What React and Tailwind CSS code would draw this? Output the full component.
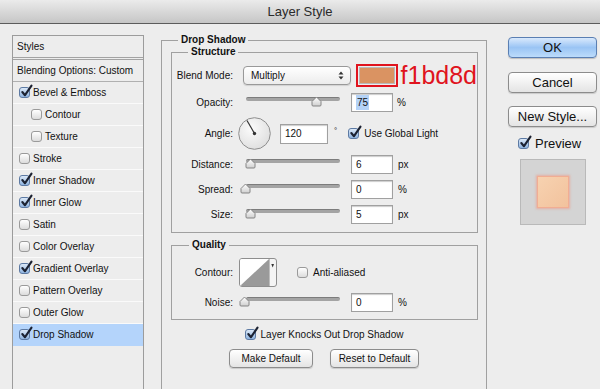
import React from 'react';

const Check = ({ on, size = 'w-[11px] h-[11px]' }) => (
    <span
        className={`relative inline-block shrink-0 ${size} rounded-[3px] border ${
            on
                ? 'border-[#5d7aa3] bg-linear-to-b from-[#dbe8f7] to-[#8fb4e0]'
                : 'border-[#9a9a9a] bg-linear-to-b from-[#ffffff] to-[#dcdcdc]'
        }`}
    >
        {on && (
            <svg className="absolute -top-[4px] left-[0px] w-[13px] h-[14px]" viewBox="0 0 13 14">
                <path d="M2.3 8 L5 11.2 L11.5 1.6" fill="none" stroke="#1c2232" strokeWidth="2.1" strokeLinecap="round" strokeLinejoin="round" />
            </svg>
        )}
    </span>
);

const styleRows = [
    { name: 'Bevel & Emboss', on: true },
    { name: 'Contour', on: false, sub: true },
    { name: 'Texture', on: false, sub: true },
    { name: 'Stroke', on: false },
    { name: 'Inner Shadow', on: true },
    { name: 'Inner Glow', on: true },
    { name: 'Satin', on: false },
    { name: 'Color Overlay', on: false },
    { name: 'Gradient Overlay', on: true },
    { name: 'Pattern Overlay', on: false },
    { name: 'Outer Glow', on: false },
    { name: 'Drop Shadow', on: true, active: true },
];

// thumb offset is measured from the start of the track
const Slider = ({ thumb }) => (
    <div className="relative w-[94px] h-[11px] shrink-0">
        <div className="h-[4px] rounded-full bg-[#a4a4a4] border-t border-[#7c7c7c]" />
        <svg className="absolute top-[-1px] w-[11px] h-[11px]" style={{ left: thumb }} viewBox="0 0 11 11">
            <defs>
                <linearGradient id="thumbFill" x1="0" y1="0" x2="0" y2="1">
                    <stop offset="0" stopColor="#ffffff" />
                    <stop offset="1" stopColor="#cfcfcf" />
                </linearGradient>
            </defs>
            <path d="M1 9 V5.5 L5.5 1 L10 5.5 V9 Q10 10 9 10 H2 Q1 10 1 9 Z" fill="url(#thumbFill)" stroke="#7a7a7a" strokeWidth="0.9" />
        </svg>
    </div>
);

const Field = ({ children, w = 'w-[42px]', h = 'h-[19px]' }) => (
    <div className={`${w} ${h} shrink-0 bg-white border border-[#a0a0a0] shadow-[inset_0_1px_1px_rgba(0,0,0,0.2)] pl-[4px] flex items-center`}>
        {children}
    </div>
);

const Label = ({ children }) => <div className="w-[61px] shrink-0 text-right">{children}</div>;

const Legend = ({ children, left }) => (
    <span className={`absolute -top-[7px] ${left} px-[3px] bg-[#ededed] font-bold leading-[12px]`}>{children}</span>
);

const Button = ({ children, className = '' }) => (
    <div className={`flex items-center justify-center rounded-[4px] border border-[#8c8c8c] bg-linear-to-b from-[#ffffff] to-[#e4e4e4] shadow-[0_1px_1px_rgba(0,0,0,0.15)] ${className}`}>
        {children}
    </div>
);

const App = () => {
    return (
        <div className="w-[600px] h-[389px] overflow-hidden bg-[#ededed] text-[10px] text-[#111] font-['Liberation_Sans',Arial,sans-serif]">
            {/* Title bar */}
            <div className="h-[24px] flex items-center justify-center border-b border-[#5c5c5c] bg-linear-to-b from-[#ebebeb] to-[#c6c6c6] text-[13px] text-[#2a2a2a]">
                Layer Style
            </div>

            <div className="flex">
                {/* Styles list */}
                <div className="ml-[12px] mt-[11px] w-[132px] h-[360px] shrink-0 border border-[#9c9c9c]">
                    <div className="h-[24px] flex items-center pl-[4px] border-b-[3px] border-double border-[#a3a3a3]">Styles</div>
                    <div className="h-[22px] flex items-center pl-[4px] border-b border-[#b0b0b0]">Blending Options: Custom</div>
                    {styleRows.map((row) => (
                        <div
                            key={row.name}
                            className={`h-[22px] flex items-center gap-[3px] border-b ${row.sub ? 'pl-[18px]' : 'pl-[6px]'} ${
                                row.active ? 'bg-[#b4d4fb] border-[#b4d4fb]' : 'border-[#fafafa]'
                            }`}
                        >
                            <Check on={row.on} />
                            <span>{row.name}</span>
                        </div>
                    ))}
                </div>

                {/* Drop Shadow panel */}
                <div className="relative ml-[17px] mt-[16px] w-[326px] h-[360px] shrink-0 border border-[#a0a0a0]">
                    <Legend left="left-[16px]">Drop Shadow</Legend>

                    {/* Structure */}
                    <div className="relative ml-[9px] mt-[11px] w-[307px] border border-[#a0a0a0] pt-[11px] pb-[8px]">
                        <Legend left="left-[16px]">Structure</Legend>

                        <div className="flex items-center h-[23px]">
                            <Label>Blend Mode:</Label>
                            <div className="ml-[10px] w-[112px] h-[19px] rounded-[4px] border border-[#999] bg-linear-to-b from-[#ffffff] to-[#ececec] shadow-[0_1px_1px_rgba(0,0,0,0.12)] flex items-center justify-between pl-[7px] pr-[6px]">
                                <span>Multiply</span>
                                <svg width="6" height="9" viewBox="0 0 6 9">
                                    <path d="M0.5 3.5 L3 0.5 L5.5 3.5 Z M0.5 5.5 L3 8.5 L5.5 5.5 Z" fill="#333" />
                                </svg>
                            </div>
                            <div className="ml-[5px] w-[42px] h-[23px] shrink-0 border-2 border-[#e0141e] p-[1px]">
                                <div className="w-full h-full border border-[#b9b9b9] bg-[#da9362]" />
                            </div>
                            <span className="ml-[3px] text-[25px] leading-[23px] text-[#e0141e] whitespace-nowrap">f1bd8d</span>
                        </div>

                        <div className="flex items-center h-[19px] mt-[6px]">
                            <Label>Opacity:</Label>
                            <div className="ml-[13px]"><Slider thumb={65} /></div>
                            <div className="ml-[11px]">
                                <Field><span className="bg-[#b5d3f7] px-[1px] leading-[15px]">75</span></Field>
                            </div>
                            <span className="ml-[4px]">%</span>
                        </div>

                        <div className="flex items-center h-[33px] mt-[5px]">
                            <Label>Angle:</Label>
                            <svg className="ml-[5px] shrink-0" width="33" height="33" viewBox="0 0 33 33">
                                <defs>
                                    <radialGradient id="dialFill" cx="0.4" cy="0.35" r="0.7">
                                        <stop offset="0" stopColor="#fbfbfb" />
                                        <stop offset="1" stopColor="#dedede" />
                                    </radialGradient>
                                </defs>
                                <circle cx="16.5" cy="16.5" r="15.8" fill="url(#dialFill)" stroke="#8e8e8e" strokeWidth="1" />
                                <line x1="16.5" y1="16.5" x2="9" y2="3.5" stroke="#333" strokeWidth="1.2" />
                                <circle cx="16.5" cy="16.5" r="1.7" fill="#333" />
                            </svg>
                            <div className="ml-[9px]">
                                <Field w="w-[48px]" h="h-[20px]">120</Field>
                            </div>
                            <span className="ml-[6px] -mt-[6px] text-[8px]">°</span>
                            <div className="ml-[11px] flex items-center gap-[5px]">
                                <Check on />
                                <span>Use Global Light</span>
                            </div>
                        </div>

                        <div className="flex items-center h-[19px] mt-[5px]">
                            <Label>Distance:</Label>
                            <div className="ml-[13px]"><Slider thumb={-1} /></div>
                            <div className="ml-[11px]"><Field>6</Field></div>
                            <span className="ml-[5px]">px</span>
                        </div>

                        <div className="flex items-center h-[19px] mt-[6px]">
                            <Label>Spread:</Label>
                            <div className="ml-[13px]"><Slider thumb={-6} /></div>
                            <div className="ml-[11px]"><Field>0</Field></div>
                            <span className="ml-[5px]">%</span>
                        </div>

                        <div className="flex items-center h-[19px] mt-[6px]">
                            <Label>Size:</Label>
                            <div className="ml-[13px]"><Slider thumb={-1} /></div>
                            <div className="ml-[11px]"><Field>5</Field></div>
                            <span className="ml-[5px]">px</span>
                        </div>
                    </div>

                    {/* Quality */}
                    <div className="relative ml-[9px] mt-[12px] w-[307px] border border-[#a0a0a0] pt-[12px] pb-[7px]">
                        <Legend left="left-[17px]">Quality</Legend>

                        <div className="flex items-center h-[29px]">
                            <Label>Contour:</Label>
                            <div className="ml-[6px] w-[38px] h-[29px] shrink-0 rounded-[3px] border border-[#8e8e8e] bg-[#f4f4f4] overflow-hidden">
                                <svg width="36" height="27" viewBox="0 0 36 27">
                                    <rect x="0" y="0" width="29" height="27" fill="#ffffff" />
                                    <path d="M0 27 L29 0 L29 27 Z" fill="#9a9a9a" />
                                    <line x1="29.5" y1="0" x2="29.5" y2="27" stroke="#bdbdbd" strokeWidth="1" />
                                    <path d="M31.3 5 L34 5 L32.65 8.5 Z" fill="#333" />
                                </svg>
                            </div>
                            <div className="ml-[20px] flex items-center gap-[5px]">
                                <Check on={false} />
                                <span>Anti-aliased</span>
                            </div>
                        </div>

                        <div className="flex items-center h-[19px] mt-[6px]">
                            <Label>Noise:</Label>
                            <div className="ml-[13px]"><Slider thumb={-7} /></div>
                            <div className="ml-[11px]"><Field>0</Field></div>
                            <span className="ml-[5px]">%</span>
                        </div>
                    </div>

                    <div className="mt-[8px] flex justify-center items-center gap-[5px] h-[12px]">
                        <Check on />
                        <span>Layer Knocks Out Drop Shadow</span>
                    </div>

                    <div className="mt-[9px] flex justify-center gap-[17px]">
                        <Button className="w-[84px] h-[19px]">Make Default</Button>
                        <Button className="w-[89px] h-[19px]">Reset to Default</Button>
                    </div>
                </div>

                {/* Right buttons */}
                <div className="ml-[21px] w-[89px] shrink-0 pt-[13px] flex flex-col text-[13px]">
                    <div className="h-[21px] flex items-center justify-center rounded-[4px] border border-[#5a7fb3] bg-linear-to-b from-[#d9e9fc] via-[#9ac4f4] to-[#bcdcfb] shadow-[0_1px_1px_rgba(0,0,0,0.2)]">
                        OK
                    </div>
                    <Button className="h-[21px] mt-[14px]">Cancel</Button>
                    <Button className="h-[21px] mt-[13px]">New Style...</Button>
                    <div className="mt-[10px] ml-[10px] flex items-center gap-[6px] h-[13px]">
                        <Check on />
                        <span>Preview</span>
                    </div>
                    <div className="mt-[9px] ml-[12px] w-[66px] h-[66px] border border-[#b9b9b9] bg-[#d4d4d4] flex items-center justify-center">
                        <div className="w-[32px] h-[32px] bg-linear-to-br from-[#f7d2b0] to-[#f2c29d] border border-[#f1ad93] shadow-[0_0_2px_1px_rgba(240,150,130,0.6)]" />
                    </div>
                </div>
            </div>
        </div>
    );
};

export default App;
